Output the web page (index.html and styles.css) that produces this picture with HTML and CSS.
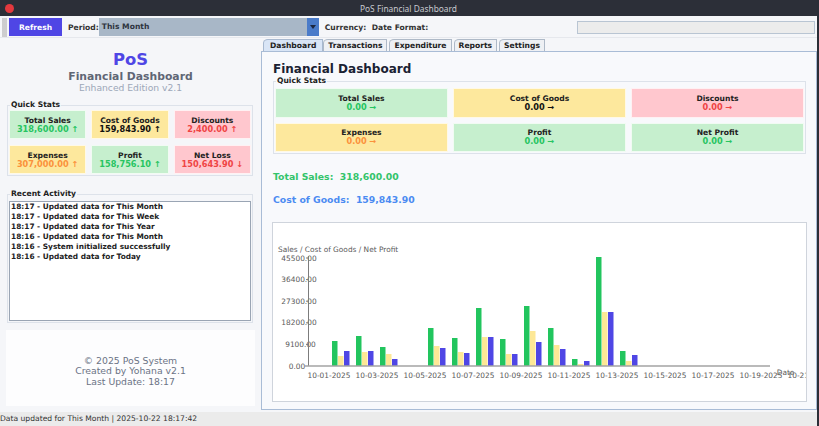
FILE: index.html
```html
<!DOCTYPE html>
<html>
<head>
<meta charset="utf-8">
<title>PoS Financial Dashboard</title>
<link rel="stylesheet" href="styles.css">
</head>
<body>
<div class="window">
  <div class="titlebar">
    <span class="close"></span>
    <span class="title">PoS Financial Dashboard</span>
    <span></span>
  </div>
  <div class="toolbar">
    <span class="grip"></span>
    <button class="btn-refresh">Refresh</button>
    <span class="tlabel period">Period:</span>
    <div class="combo">
      <span class="combo-text">This Month</span>
      <span class="combo-arrow"><svg width="6" height="4" viewBox="0 0 6 4"><path d="M0 0 L6 0 L3 4 Z" fill="#1c2740"/></svg></span>
    </div>
    <span class="tlabel currency">Currency:</span>
    <span class="tlabel datefmt">Date Format:</span>
    <div class="textfield"></div>
  </div>
  <div class="main">
    <aside class="side">
      <div class="brand">
        <div class="brand-pos">PoS</div>
        <div class="brand-sub">Financial Dashboard</div>
        <div class="brand-ed">Enhanced Edition v2.1</div>
      </div>
      <fieldset class="group side-stats">
        <legend>Quick Stats</legend>
        <div class="cards">
          <div class="card green"><span class="card-label">Total Sales</span><span class="card-value v-green">318,600.00 ↑</span></div>
          <div class="card yellow"><span class="card-label">Cost of Goods</span><span class="card-value v-dark">159,843.90 ↑</span></div>
          <div class="card red"><span class="card-label">Discounts</span><span class="card-value v-red">2,400.00 ↑</span></div>
          <div class="card yellow"><span class="card-label">Expenses</span><span class="card-value v-orange">307,000.00 ↑</span></div>
          <div class="card green"><span class="card-label">Profit</span><span class="card-value v-green">158,756.10 ↑</span></div>
          <div class="card red"><span class="card-label">Net Loss</span><span class="card-value v-red">150,643.90 ↓</span></div>
        </div>
      </fieldset>
      <fieldset class="group activity">
        <legend>Recent Activity</legend>
        <div class="listbox">
          <div class="li">18:17 - Updated data for This Month</div>
          <div class="li">18:17 - Updated data for This Week</div>
          <div class="li">18:17 - Updated data for This Year</div>
          <div class="li">18:16 - Updated data for This Month</div>
          <div class="li">18:16 - System initialized successfully</div>
          <div class="li">18:16 - Updated data for Today</div>
        </div>
      </fieldset>
      <div class="footer">
        <div>© 2025 PoS System</div>
        <div>Created by Yohana v2.1</div>
        <div>Last Update: 18:17</div>
      </div>
    </aside>
    <section class="content">
      <div class="tabs">
        <span class="tab selected">Dashboard</span>
        <span class="tab">Transactions</span>
        <span class="tab">Expenditure</span>
        <span class="tab">Reports</span>
        <span class="tab">Settings</span>
      </div>
      <div class="panel">
        <h1 class="heading">Financial Dashboard</h1>
        <fieldset class="group main-stats">
          <legend>Quick Stats</legend>
          <div class="cards big">
            <div class="card green"><span class="card-label">Total Sales</span><span class="card-value v-green">0.00 →</span></div>
            <div class="card yellow"><span class="card-label">Cost of Goods</span><span class="card-value v-dark">0.00 →</span></div>
            <div class="card red"><span class="card-label">Discounts</span><span class="card-value v-red">0.00 →</span></div>
            <div class="card yellow"><span class="card-label">Expenses</span><span class="card-value v-orange">0.00 →</span></div>
            <div class="card green"><span class="card-label">Profit</span><span class="card-value v-green">0.00 →</span></div>
            <div class="card green"><span class="card-label">Net Profit</span><span class="card-value v-green">0.00 →</span></div>
          </div>
        </fieldset>
        <div class="summary sales">Total Sales:  318,600.00</div>
        <div class="summary cogs">Cost of Goods:  159,843.90</div>
        <div class="chart">
          <svg width="533" height="178" viewBox="0 0 533 178">
            <g class="txt">
              <text x="5" y="28.7">Sales / Cost of Goods / Net Profit</text>
              <text x="26" y="37.6" text-anchor="middle">45500.00</text>
              <text x="26" y="59.2" text-anchor="middle">36400.00</text>
              <text x="26" y="80.8" text-anchor="middle">27300.00</text>
              <text x="26" y="102.4" text-anchor="middle">18200.00</text>
              <text x="27.5" y="124" text-anchor="middle">9100.00</text>
              <text x="24" y="145.6" text-anchor="middle">0.00</text>
            </g>
            <line x1="35.5" y1="33" x2="35.5" y2="143" stroke="#7c7c7c" stroke-width="1"/>
            <g stroke="#7c7c7c" stroke-width="1">
              <line x1="33" y1="35" x2="35.5" y2="35"/>
              <line x1="33" y1="56.6" x2="35.5" y2="56.6"/>
              <line x1="33" y1="78.2" x2="35.5" y2="78.2"/>
              <line x1="33" y1="99.8" x2="35.5" y2="99.8"/>
              <line x1="33" y1="121.4" x2="35.5" y2="121.4"/>
            </g>
            <g class="bars-g" fill="#22c55e">
              <rect x="59" y="118" width="5.5" height="25"/>
              <rect x="83" y="113" width="5.5" height="30"/>
              <rect x="107" y="124" width="5.5" height="19"/>
              <rect x="155" y="105" width="5.5" height="38"/>
              <rect x="179" y="115" width="5.5" height="28"/>
              <rect x="203" y="85" width="5.5" height="58"/>
              <rect x="227" y="116" width="5.5" height="27"/>
              <rect x="251" y="83" width="5.5" height="60"/>
              <rect x="275" y="105" width="5.5" height="38"/>
              <rect x="299" y="136" width="5.5" height="7"/>
              <rect x="323" y="34" width="5.5" height="109"/>
              <rect x="347" y="128" width="5.5" height="15"/>
            </g>
            <g fill="#fde896">
              <rect x="65" y="133" width="5.5" height="10"/>
              <rect x="89" y="129" width="5.5" height="14"/>
              <rect x="113" y="131" width="5.5" height="12"/>
              <rect x="161" y="123" width="5.5" height="20"/>
              <rect x="185" y="129" width="5.5" height="14"/>
              <rect x="209" y="114" width="5.5" height="29"/>
              <rect x="233" y="131" width="5.5" height="12"/>
              <rect x="257" y="108" width="5.5" height="35"/>
              <rect x="281" y="122" width="5.5" height="21"/>
              <rect x="305" y="141" width="5.5" height="2"/>
              <rect x="329" y="89" width="5.5" height="54"/>
              <rect x="353" y="138" width="5.5" height="5"/>
            </g>
            <g fill="#4f46e5">
              <rect x="71" y="128" width="5.5" height="15"/>
              <rect x="95" y="128" width="5.5" height="15"/>
              <rect x="119" y="136" width="5.5" height="7"/>
              <rect x="167" y="125" width="5.5" height="18"/>
              <rect x="191" y="130" width="5.5" height="13"/>
              <rect x="215" y="114" width="5.5" height="29"/>
              <rect x="239" y="131" width="5.5" height="12"/>
              <rect x="263" y="119" width="5.5" height="24"/>
              <rect x="287" y="126" width="5.5" height="17"/>
              <rect x="311" y="138" width="5.5" height="5"/>
              <rect x="335" y="89" width="5.5" height="54"/>
              <rect x="359" y="132" width="5.5" height="11"/>
            </g>
            <line x1="32" y1="143" x2="497" y2="143" stroke="#a3a3a3" stroke-width="1.6"/>
            <g class="txt" text-anchor="middle">
              <text x="56" y="154.6">10-01-2025</text>
              <text x="104" y="154.6">10-03-2025</text>
              <text x="152" y="154.6">10-05-2025</text>
              <text x="200" y="154.6">10-07-2025</text>
              <text x="248" y="154.6">10-09-2025</text>
              <text x="296" y="154.6">10-11-2025</text>
              <text x="344" y="154.6">10-13-2025</text>
              <text x="392" y="154.6">10-15-2025</text>
              <text x="440" y="154.6">10-17-2025</text>
              <text x="488" y="154.6">10-19-2025</text>
              <text x="536" y="154.6">10-21-2025</text>
            </g>
            <text class="txt" x="503.7" y="151.5">Date</text>
          </svg>
        </div>
      </div>
    </section>
  </div>
  <div class="statusbar">Data updated for This Month | 2025-10-22 18:17:42</div>
</div>
</body>
</html>
```
FILE: styles.css
```css
html, body {
  margin: 0;
  padding: 0;
  background: #2b2e37;
}

.window {
  width: 817px;
  height: 426px;
  border-right: 2px solid #2b2e37;
  display: flex;
  flex-direction: column;
  background: #f5f6f9;
  font-family: "DejaVu Sans", sans-serif;
  overflow: hidden;
}

/* title bar */
.titlebar {
  height: 16px;
  flex: none;
  background: #2c2f38;
  display: grid;
  grid-template-columns: 1fr auto 1fr;
  align-items: center;
}
.close {
  width: 9px;
  height: 9px;
  border-radius: 50%;
  background: #e3393e;
  margin-left: 4.5px;
}
.title {
  font-family: "Noto Sans", sans-serif;
  font-size: 8.4px;
  color: #c7c9cf;
}

/* toolbar */
.toolbar {
  height: 22px;
  flex: none;
  display: flex;
  align-items: center;
  background: #f5f6f9;
  box-shadow: inset 0 -1px 0 #e6e8ed;
}
.grip {
  width: 5px;
  height: 19px;
  margin-left: 2px;
  background-image: radial-gradient(circle, #9d9d9d 0.6px, transparent 0.8px);
  background-size: 2px 2px;
}
.btn-refresh {
  margin-left: 2px;
  width: 53px;
  height: 18px;
  border: none;
  padding: 0;
  background: #4f46e5;
  color: #ffffff;
  font-family: "DejaVu Sans", sans-serif;
  font-weight: bold;
  font-size: 7.6px;
}
.tlabel {
  font-weight: bold;
  font-size: 7.6px;
  color: #333333;
}
.period { margin-left: 6px; }
.currency { margin-left: 6px; }
.datefmt { margin-left: 5.5px; }
.combo {
  width: 220px;
  height: 18px;
  background: #a8b7c7;
  display: flex;
}
.combo-text {
  flex: 1;
  padding-left: 3px;
  font-weight: bold;
  font-size: 7.6px;
  line-height: 18px;
  color: #2e3440;
}
.combo-arrow {
  width: 12px;
  background: #4a7bc9;
  display: flex;
  align-items: center;
  justify-content: center;
}
.textfield {
  margin-left: auto;
  margin-right: 2px;
  width: 238px;
  height: 13px;
  box-sizing: border-box;
  background: #ececec;
  border: 1px solid #b9c5d3;
}

/* main */
.main {
  flex: 1;
  display: flex;
  min-height: 0;
}

.side {
  width: 258px;
  flex: none;
  display: flex;
  flex-direction: column;
}
.brand {
  padding-left: 3px;
  text-align: center;
  margin-top: 12px;
}
.brand-pos {
  font-weight: bold;
  font-size: 16.4px;
  line-height: 20px;
  color: #4f46e5;
}
.brand-sub {
  margin-top: 1px;
  font-weight: bold;
  font-size: 10.8px;
  line-height: 12px;
  color: #5f6675;
}
.brand-ed {
  font-size: 9.2px;
  line-height: 10px;
  color: #9ca7b8;
}

.group {
  border: 1px solid #dde2ea;
  padding: 1px;
  min-width: 0;
}
.group legend {
  padding: 0 1px;
  margin-left: 1px;
  font-weight: bold;
  font-size: 7.6px;
  line-height: 8px;
  color: #222222;
}
.side-stats {
  margin: 8px 5px 0 7px;
}
.cards {
  display: grid;
  grid-template-columns: repeat(3, 1fr);
  gap: 6px 5px;
}
.card {
  height: 29px;
  box-sizing: border-box;
  border: 1px solid rgba(255, 255, 255, 0.75);
  display: flex;
  flex-direction: column;
  justify-content: center;
  align-items: center;
}
.card-label {
  font-weight: bold;
  font-size: 7.6px;
  line-height: 9px;
  color: #222222;
}
.card-value {
  font-weight: bold;
  font-size: 8.2px;
  line-height: 9px;
}
.green { background: #c6efce; }
.yellow { background: #fde89d; }
.red { background: #ffc7ce; }
.v-green { color: #27c461; }
.v-dark { color: #111111; }
.v-red { color: #ef4444; }
.v-orange { color: #fb923c; }

.activity {
  margin: 14px 5px 0 7px;
}
.listbox {
  margin-top: 2px;
  height: 120px;
  box-sizing: border-box;
  background: #ffffff;
  border: 1px solid #9aa5b4;
  padding-left: 1px;
}
.li {
  font-weight: bold;
  font-size: 7.4px;
  line-height: 10px;
  color: #222222;
  white-space: nowrap;
}

.footer {
  margin: 7px 3px 0 6px;
  height: 76px;
  box-sizing: border-box;
  padding-top: 26px;
  background: #fdfdfe;
  text-align: center;
  font-size: 9.3px;
  line-height: 10.3px;
  color: #6b7385;
}

/* right content */
.content {
  flex: 1;
  margin-left: 3px;
  padding-bottom: 2px;
  display: flex;
  flex-direction: column;
  min-width: 0;
}
.tabs {
  height: 13px;
  flex: none;
  display: flex;
  align-items: flex-end;
  padding-left: 2px;
}
.tab {
  height: 12px;
  box-sizing: border-box;
  padding: 0 4px;
  margin-left: 2px;
  border: 1px solid #aeb9c7;
  border-bottom: none;
  border-top-left-radius: 5px 4px;
  background: #eef0f4;
  font-weight: bold;
  font-size: 7.6px;
  line-height: 11px;
  color: #222222;
}
.tab.selected {
  margin-left: 0;
  padding: 0 6px;
  background: #d9e5f6;
  border-color: #a7b8cf;
}
.tab.selected + .tab {
  margin-left: 0;
}

.panel {
  flex: 1;
  border: 1px solid #a9bcd6;
  background: #f8f9fc;
  padding: 10px 10px 0 11px;
  display: flex;
  flex-direction: column;
}
.heading {
  margin: 0;
  font-weight: bold;
  font-size: 12px;
  line-height: 14px;
  color: #1a2133;
}
.main-stats {
  margin: 1px 0 0 0;
}
.main-stats .cards {
  padding-top: 2px;
  gap: 5px 5px;
}
.main-stats .card {
  height: 29.5px;
}
.summary {
  font-weight: bold;
  font-size: 9.3px;
  line-height: 12px;
  white-space: pre;
}
.sales {
  margin-top: 16.5px;
  color: #33c46a;
}
.cogs {
  margin-top: 11.2px;
  color: #4b8bf2;
}
.chart {
  margin: 16.3px -1px 0 -1px;
  height: 180px;
  box-sizing: border-box;
  background: #ffffff;
  border: 1px solid #cfd4dc;
  overflow: hidden;
}
.chart svg {
  display: block;
}
.txt text, text.txt {
  font-family: "DejaVu Sans", sans-serif;
  font-size: 7.4px;
  fill: #5a5a5a;
}

.statusbar {
  height: 14px;
  flex: none;
  background: #ebebeb;
  font-size: 7.6px;
  line-height: 14px;
  color: #333333;
  white-space: nowrap;
}
```
